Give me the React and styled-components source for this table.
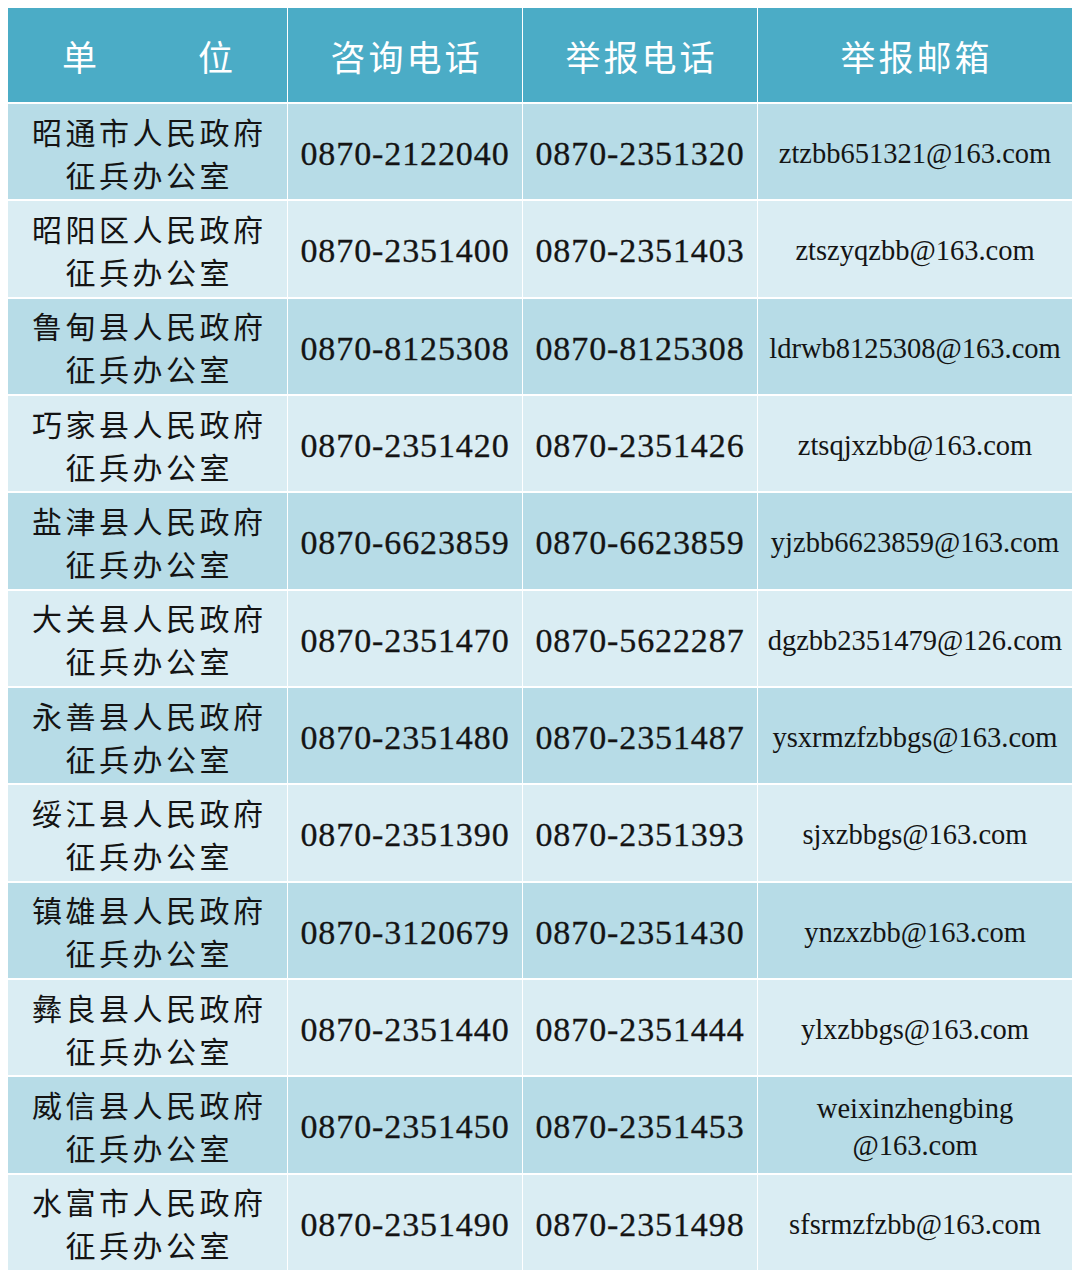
import React from 'react'
import styled, { createGlobalStyle } from 'styled-components'

const rows = [
  ['昭通市', '0870-2122040', '0870-2351320', 'ztzbb651321@163.com'],
  ['昭阳区', '0870-2351400', '0870-2351403', 'ztszyqzbb@163.com'],
  ['鲁甸县', '0870-8125308', '0870-8125308', 'ldrwb8125308@163.com'],
  ['巧家县', '0870-2351420', '0870-2351426', 'ztsqjxzbb@163.com'],
  ['盐津县', '0870-6623859', '0870-6623859', 'yjzbb6623859@163.com'],
  ['大关县', '0870-2351470', '0870-5622287', 'dgzbb2351479@126.com'],
  ['永善县', '0870-2351480', '0870-2351487', 'ysxrmzfzbbgs@163.com'],
  ['绥江县', '0870-2351390', '0870-2351393', 'sjxzbbgs@163.com'],
  ['镇雄县', '0870-3120679', '0870-2351430', 'ynzxzbb@163.com'],
  ['彝良县', '0870-2351440', '0870-2351444', 'ylxzbbgs@163.com'],
  ['威信县', '0870-2351450', '0870-2351453', ['weixinzhengbing', '@163.com']],
  ['水富市', '0870-2351490', '0870-2351498', 'sfsrmzfzbb@163.com'],
]

const App = () => {
  return (
    <>
      <GlobalStyle />
      <Table>
        <Cell $tone="head">
          <Spread>
            <span>单</span>
            <span>位</span>
          </Spread>
        </Cell>
        <Cell $tone="head"><HeadText>咨询电话</HeadText></Cell>
        <Cell $tone="head"><HeadText>举报电话</HeadText></Cell>
        <Cell $tone="head"><HeadText>举报邮箱</HeadText></Cell>

        {rows.map(([place, ask, report, mail], i) => {
          const tone = i % 2 === 0 ? 'dark' : 'light'
          return (
            <React.Fragment key={place}>
              <Cell $tone={tone}>
                <Unit>
                  {place}人民政府
                  <br />
                  征兵办公室
                </Unit>
              </Cell>
              <Cell $tone={tone}><Phone>{ask}</Phone></Cell>
              <Cell $tone={tone}><Phone>{report}</Phone></Cell>
              <Cell $tone={tone}>
                <Mail>
                  {Array.isArray(mail) ? (
                    <>
                      {mail[0]}
                      <br />
                      {mail[1]}
                    </>
                  ) : mail}
                </Mail>
              </Cell>
            </React.Fragment>
          )
        })}
      </Table>
    </>
  )
}

const GlobalStyle = createGlobalStyle`
  body {
    margin: 8px;
    background: #ffffff;
    font-family: "Liberation Serif", "Noto Sans CJK SC", serif;
  }
`

const Table = styled.div`
  display: grid;
  grid-template-columns: 279px 234px 234px 314px;
  grid-template-rows: 94px repeat(12, 95.33px);
  gap: 2px 1px;
  width: 1064px;
  background-color: #ffffff;
`

const tones = {
  head: '#4bacc6',
  dark: '#b7dce7',
  light: '#daedf3',
}

const Cell = styled.div`
  display: flex;
  align-items: center;
  justify-content: center;
  text-align: center;
  background-color: ${(p) => tones[p.$tone]};
  color: ${(p) => (p.$tone === 'head' ? '#ffffff' : '#141414')};
  overflow: hidden;
`

const HeadText = styled.div`
  font-family: "Noto Sans CJK SC", sans-serif;
  font-size: 35px;
  letter-spacing: 3px;
  padding-left: 3px;
  line-height: 1;
`

// "单  位" spread wide across the first header cell
const Spread = styled.div`
  display: flex;
  justify-content: space-between;
  width: 171px;
  font-family: "Noto Sans CJK SC", sans-serif;
  font-size: 35px;
  line-height: 1;
`

const Unit = styled.div`
  font-family: "Noto Sans CJK SC", sans-serif;
  font-size: 30px;
  line-height: 43px;
  letter-spacing: 3.5px;
  padding-left: 3.5px;
  padding-top: 2px;
`

const Phone = styled.div`
  font-family: "Liberation Serif", serif;
  font-size: 34px;
  letter-spacing: 0.9px;
  line-height: 1;
  padding-top: 5px;
  -webkit-text-stroke: 0.3px #141414;
`

const Mail = styled.div`
  font-family: "Liberation Serif", serif;
  font-size: 28.5px;
  line-height: 37px;
  padding-top: 4px;
`

export default App
